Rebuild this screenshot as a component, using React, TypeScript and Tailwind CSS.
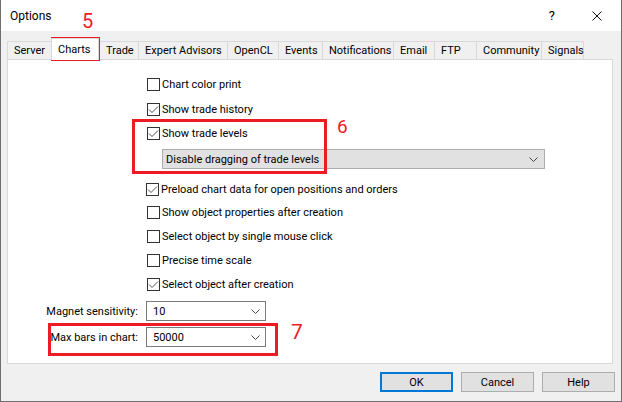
import React from "react";

const tabs = [
  { label: "Server", w: "w-[44px]" },
  { label: "Charts", w: "w-[48px]", active: true },
  { label: "Trade", w: "w-[39px]" },
  { label: "Expert Advisors", w: "w-[89px]" },
  { label: "OpenCL", w: "w-[51px]" },
  { label: "Events", w: "w-[44px]" },
  { label: "Notifications", w: "w-[71px]" },
  { label: "Email", w: "w-[41px]" },
  { label: "FTP", w: "w-[42px]" },
  { label: "Community", w: "w-[65px]" },
  { label: "Signals", w: "w-[43px]" },
];

function Chevron() {
  return (
    <svg width="9" height="5" viewBox="0 0 9 5" className="shrink-0">
      <path d="M0.5 0.5 L4.5 4.5 L8.5 0.5" fill="none" stroke="#444" strokeWidth="1" />
    </svg>
  );
}

function CheckBox({ checked }: { checked?: boolean }) {
  return (
    <span className="flex h-[13px] w-[13px] shrink-0 items-center justify-center border border-[#333] bg-white">
      {checked ? (
        <svg width="11" height="11" viewBox="0 0 11 11">
          <path d="M1 5.5 L4 8.5 L10 2.5" fill="none" stroke="#555" strokeWidth="1" />
        </svg>
      ) : null}
    </span>
  );
}

function Row(props: { label: string; checked?: boolean; className?: string }) {
  const { label, checked, className } = props;
  return (
    <div className={`flex h-[13px] items-center gap-[2px] ${className ?? ""}`}>
      <CheckBox checked={checked} />
      <span className="whitespace-nowrap leading-none">{label}</span>
    </div>
  );
}

function Combo(props: { value: string }) {
  return (
    <div className="flex h-[20px] w-[120px] items-center justify-between border border-[#7a7a7a] bg-white pl-[6px] pr-[5px]">
      <span className="leading-none">{props.value}</span>
      <Chevron />
    </div>
  );
}

function WinButton(props: { label: string; primary?: boolean }) {
  const { label, primary } = props;
  return (
    <button
      type="button"
      className={`flex h-[20px] w-[73px] items-center justify-center bg-[#e1e1e1] leading-none ${
        primary ? "border-2 border-[#0078d7]" : "border border-[#adadad]"
      }`}
    >
      {label}
    </button>
  );
}

export default function App() {
  return (
    <div
      className="relative flex h-[402px] w-[622px] flex-col border-x border-b border-[#6e6e6e] bg-[#f0f0f0] text-[11px] text-black"
      style={{ fontFamily: "Roboto, 'Liberation Sans', sans-serif" }}
    >
      {/* title bar */}
      <div className="flex h-[31px] shrink-0 items-center bg-white pl-[9px]">
        <span className="text-[12px] leading-none">Options</span>
        <span className="ml-auto mr-[37px] text-[13px] leading-none">?</span>
        <svg width="10" height="10" viewBox="0 0 10 10" className="mr-[19px]">
          <path d="M0.5 0.5 L9.5 9.5 M9.5 0.5 L0.5 9.5" stroke="#111" strokeWidth="1" />
        </svg>
      </div>

      {/* tabs */}
      <div className="mt-[10px] flex h-[18px] items-end pl-[6px]">
        {tabs.map((t, i) => (
          <div
            key={t.label}
            className={`flex shrink-0 items-center whitespace-nowrap border-t border-l border-[#d9d9d9] pl-[6px] leading-none ${t.w} ${
              t.active ? "relative z-10 -mb-[1px] h-[22px] border-r bg-white" : "h-[18px] bg-[#f0f0f0]"
            } ${i === tabs.length - 1 ? "border-r" : ""}`}
          >
            {t.label}
          </div>
        ))}
      </div>

      {/* panel */}
      <div className="ml-[6px] flex h-[305px] w-[606px] flex-col border border-[#d9d9d9] bg-white">
        <div className="flex flex-col pl-[139px]">
          <Row label="Chart color print" className="mt-[18px]" />
          <Row label="Show trade history" checked className="mt-[12px]" />
          <Row label="Show trade levels" checked className="mt-[11px]" />
          <div className="ml-[15px] mt-[9px] flex h-[20px] w-[383px] items-center justify-between border border-[#adadad] bg-[#e1e1e1] pl-[3px] pr-[6px]">
            <span className="leading-none">Disable dragging of trade levels</span>
            <Chevron />
          </div>
          <Row label="Preload chart data for open positions and orders" checked className="-ml-[1px] mt-[14px]" />
          <Row label="Show object properties after creation" className="mt-[10px]" />
          <Row label="Select object by single mouse click" className="mt-[11px]" />
          <Row label="Precise time scale" className="mt-[11px]" />
          <Row label="Select object after creation" checked className="mt-[11px]" />
        </div>
        <div className="mt-[10px] flex items-center gap-[8px]">
          <span className="w-[130px] whitespace-nowrap text-right leading-none">Magnet sensitivity:</span>
          <Combo value="10" />
        </div>
        <div className="mt-[6px] flex items-center gap-[8px]">
          <span className="w-[130px] whitespace-nowrap text-right leading-none">Max bars in chart:</span>
          <Combo value="50000" />
        </div>
      </div>

      {/* buttons */}
      <div className="mt-[8px] flex justify-end gap-[8px] pr-[6px]">
        <WinButton label="OK" primary />
        <WinButton label="Cancel" />
        <WinButton label="Help" />
      </div>

      {/* annotations */}
      <div className="absolute left-[50px] top-[37px] h-[24px] w-[49px] border-[3px] border-[#ed1c24]" />
      <span className="absolute left-[81px] top-[11px] text-[20px] leading-none text-[#ed1c24]">5</span>
      <div className="absolute left-[131px] top-[119px] h-[55px] w-[195px] border-[3px] border-[#ed1c24]" />
      <span className="absolute left-[336px] top-[117px] text-[19px] leading-none text-[#ed1c24]">6</span>
      <div className="absolute left-[47px] top-[323px] h-[33px] w-[230px] border-[3px] border-[#ed1c24]" />
      <span className="absolute left-[290px] top-[322px] text-[21px] leading-none text-[#ed1c24]">7</span>
    </div>
  );
}
